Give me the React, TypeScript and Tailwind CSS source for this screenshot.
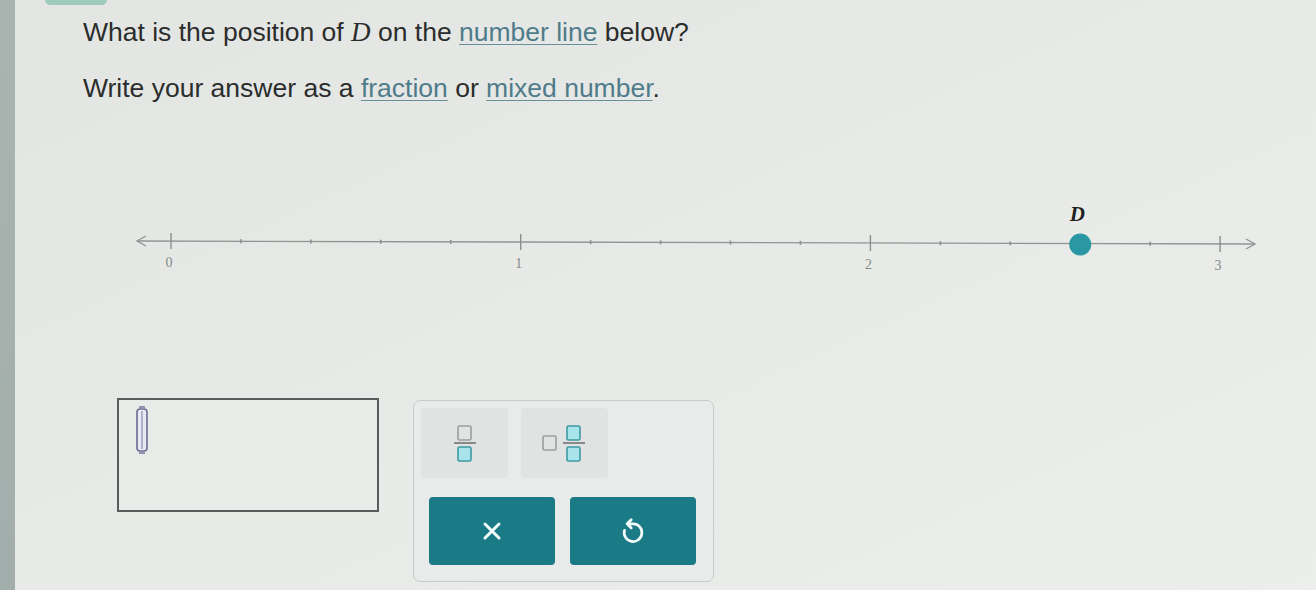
import React from "react";

const ORIGIN = 171;
const UNIT = 349.7;
const LINE_X0 = 137;
const LINE_X1 = 1255;
const OFFSET_X = 15; // width of the left strip
const lineY = (x: number) => 50 + (3 * (x - LINE_X0)) / (LINE_X1 - LINE_X0);

function NumberLine() {
  const ticks: { x: number; major: boolean; label?: string }[] = [];
  for (let i = 0; i <= 15; i++) {
    const v = i / 5;
    const x = ORIGIN + v * UNIT;
    const major = i % 5 === 0;
    ticks.push({ x, major, label: major ? String(i / 5) : undefined });
  }
  const dX = ORIGIN + 2.6 * UNIT;
  return (
    <svg width={1301} height={90} className="block" style={{ overflow: "visible" }}>
      <g transform={`translate(${-OFFSET_X},0)`}>
        <line x1={LINE_X0} y1={lineY(LINE_X0)} x2={LINE_X1} y2={lineY(LINE_X1)} stroke="#8f9593" strokeWidth={1.3} />
        <polyline
          points={`${LINE_X0 + 9},${lineY(LINE_X0) - 5} ${LINE_X0},${lineY(LINE_X0)} ${LINE_X0 + 9},${lineY(LINE_X0) + 5}`}
          fill="none"
          stroke="#8f9593"
          strokeWidth={1.3}
        />
        <polyline
          points={`${LINE_X1 - 9},${lineY(LINE_X1) - 5} ${LINE_X1},${lineY(LINE_X1)} ${LINE_X1 - 9},${lineY(LINE_X1) + 5}`}
          fill="none"
          stroke="#8f9593"
          strokeWidth={1.3}
        />
        {ticks.map((t) => {
          const y = lineY(t.x);
          return (
            <g key={t.x}>
              <line
                x1={t.x}
                y1={y - (t.major ? 8 : 2)}
                x2={t.x}
                y2={y + (t.major ? 8 : 2)}
                stroke="#8a908e"
                strokeWidth={t.major ? 1.4 : 1.6}
              />
              {t.label && (
                <text
                  x={t.x - 2}
                  y={y + 26}
                  textAnchor="middle"
                  fill="#858a88"
                  style={{ fontFamily: '"Liberation Serif", serif', fontSize: 14 }}
                >
                  {t.label}
                </text>
              )}
            </g>
          );
        })}
        <text
          x={dX - 3}
          y={30}
          textAnchor="middle"
          fill="#1f2120"
          style={{ fontFamily: '"Liberation Serif", serif', fontSize: 21, fontWeight: 700, fontStyle: "italic" }}
        >
          D
        </text>
        <circle cx={dX} cy={lineY(dX) + 1} r={11} fill="#2a98a4" />
      </g>
    </svg>
  );
}

function FractionIcon({ mixed }: { mixed?: boolean }) {
  return (
    <svg width={mixed ? 48 : 30} height={44} viewBox={mixed ? "0 0 48 44" : "0 0 30 44"}>
      {mixed && <rect x={2} y={15} width={13} height={14} rx={1.5} fill="none" stroke="#9a9e9c" strokeWidth={1.6} />}
      <g transform={mixed ? "translate(18,0)" : "translate(0,0)"}>
        <rect x={8} y={5} width={13} height={14} rx={1.5} fill={mixed ? "#a8e4ea" : "none"} stroke={mixed ? "#3d9aa2" : "#9a9e9c"} strokeWidth={1.6} />
        <line x1={4} y1={22} x2={26} y2={22} stroke="#707472" strokeWidth={1.6} />
        <rect x={8} y={26} width={13} height={14} rx={1.5} fill="#a8e4ea" stroke="#3d9aa2" strokeWidth={1.6} />
      </g>
    </svg>
  );
}

function CursorIcon() {
  return (
    <svg width={16} height={50} viewBox="0 0 16 50">
      <line x1={5} y1={2} x2={11} y2={2} stroke="#6d6c95" strokeWidth={1.4} />
      <line x1={5} y1={48} x2={11} y2={48} stroke="#6d6c95" strokeWidth={1.4} />
      <rect x={3} y={4} width={10} height={42} rx={3} fill="#e9e9f3" stroke="#6d6c95" strokeWidth={1.6} />
      <line x1={8} y1={6} x2={8} y2={44} stroke="#8e8db3" strokeWidth={1.2} />
    </svg>
  );
}

function ClearIcon() {
  return (
    <svg width={20} height={20} viewBox="0 0 20 20">
      <path d="M3 3 L17 17 M17 3 L3 17" stroke="#f4fbfb" strokeWidth={3} strokeLinecap="round" />
    </svg>
  );
}

function UndoIcon() {
  return (
    <svg width={26} height={31} viewBox="0 0 22 26">
      <path
        d="M9.5 3 L6 6.5 L9.5 10 M6 6.5 H11 A7.5 7.5 0 1 1 3.8 12"
        fill="none"
        stroke="#f4fbfb"
        strokeWidth={2.3}
        strokeLinecap="round"
        strokeLinejoin="round"
      />
    </svg>
  );
}

export default function App() {
  const font = { fontFamily: '"Liberation Sans", Arial, sans-serif' };
  const link = "text-[#4f7c8a] underline decoration-[#6a8f99] decoration-1 underline-offset-[3px]";
  return (
    <div className="flex h-[590px] w-[1316px] overflow-hidden" style={font}>
      <div className="w-[15px] shrink-0 bg-gradient-to-b from-[#a9b4b1] to-[#a2aeab]" />
      <div className="flex flex-1 flex-col bg-gradient-to-br from-[#e3e5e2] via-[#e8eae8] to-[#eceeec]">
        <div className="ml-[30px] h-[5px] w-[62px] rounded-b-[6px] bg-[#9ecbbd]" />
        <div className="pl-[68px] pt-[12px] text-[26.5px] leading-[30px] text-[#2b2d2c]">
          <p>
            What is the position of <span className="font-['Liberation_Serif'] italic text-[27px]">D</span> on the{" "}
            <span className={link}>number line</span> below?
          </p>
          <p className="mt-[26px]">
            Write your answer as a <span className={link}>fraction</span> or{" "}
            <span className={link}>mixed number</span>.
          </p>
        </div>
        <div className="mt-[88px]">
          <NumberLine />
        </div>
        <div className="mt-[117px] flex items-start pl-[102px]">
          <div className="h-[114px] w-[262px] border-2 border-[#5a5c5b] bg-[#e9ebe9] pl-[15px] pt-[5px]">
            <CursorIcon />
          </div>
          <div className="ml-[34px] mt-[2px] flex h-[182px] w-[301px] flex-col rounded-[7px] border border-[#c7cbca] bg-[#e9ebea] px-[7px] pt-[7px]">
            <div className="flex gap-[13px]">
              <div className="flex h-[70px] w-[87px] items-center justify-center rounded-[4px] bg-[#e1e3e2]">
                <FractionIcon />
              </div>
              <div className="flex h-[70px] w-[87px] items-center justify-center rounded-[4px] bg-[#e1e3e2]">
                <FractionIcon mixed />
              </div>
            </div>
            <div className="mt-[19px] flex gap-[15px] pl-[8px]">
              <button className="flex h-[68px] w-[126px] items-center justify-center rounded-[4px] bg-[#1a7a86]">
                <ClearIcon />
              </button>
              <button className="flex h-[68px] w-[126px] items-center justify-center rounded-[4px] bg-[#1a7a86]">
                <UndoIcon />
              </button>
            </div>
          </div>
        </div>
      </div>
    </div>
  );
}
